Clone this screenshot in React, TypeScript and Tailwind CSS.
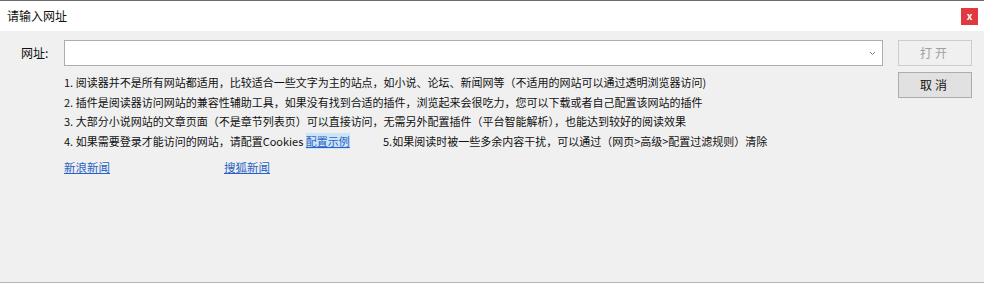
import React from 'react';

const font = { fontFamily: '"Noto Sans CJK SC", "Noto Sans", sans-serif' };

// Notes shown under the URL field
const tips = [
  '1. 阅读器并不是所有网站都适用，比较适合一些文字为主的站点，如小说、论坛、新闻网等（不适用的网站可以通过透明浏览器访问)',
  '2. 插件是阅读器访问网站的兼容性辅助工具，如果没有找到合适的插件，浏览起来会很吃力，您可以下载或者自己配置该网站的插件',
  '3. 大部分小说网站的文章页面（不是章节列表页）可以直接访问，无需另外配置插件（平台智能解析），也能达到较好的阅读效果',
];

export default function App() {
  return (
    <div className="w-[984px] h-[283px] flex flex-col border-t border-[#6b6b6b] text-[#111] overflow-hidden" style={font}>
      <div className="h-[30px] bg-white flex items-center justify-between pl-[7px] pr-[6px]">
        <span className="text-[12px]">请输入网址</span>
        <button className="w-[17px] h-[17px] bg-[#e0393e] text-white text-[10px] font-bold leading-none flex items-center justify-center">
          x
        </button>
      </div>

      <div className="flex-1 bg-[#f0f0f0] border-b border-[#b5b5b5] flex pt-[9px]">
        <div className="flex-1 flex flex-col">
          <div className="flex items-center">
            <span className="w-[64px] pl-[21px] text-[12px]">网址:</span>
            <div className="w-[819px] h-[26px] bg-white border border-[#adadad] flex items-center justify-end pr-[6px]">
              <svg width="7" height="5" viewBox="0 0 7 5" fill="none" stroke="#808080" strokeWidth="1">
                <path d="M1 1l2.5 2.5L6 1" />
              </svg>
            </div>
          </div>

          <div className="pl-[64px] pt-[7px] text-[11px] leading-[19.7px]">
            {tips.map((t) => (
              <div key={t}>{t}</div>
            ))}
            <div className="flex">
              <span className="w-[319px]">
                4. 如果需要登录才能访问的网站，请配置Cookies{' '}
                <a className="text-[#2a62c4] underline bg-[#cce4f7]">配置示例</a>
              </span>
              <span>5.如果阅读时被一些多余内容干扰，可以通过（网页&gt;高级&gt;配置过滤规则）清除</span>
            </div>
            <div className="flex mt-[6px] text-[11.5px]">
              <a className="w-[160px] text-[#2a62c4] underline">新浪新闻</a>
              <a className="text-[#2a62c4] underline">搜狐新闻</a>
            </div>
          </div>
        </div>

        <div className="w-[86px] pr-[12px] flex flex-col gap-[6px]">
          <button className="w-[74px] h-[26px] border border-[#cccccc] bg-[#f0f0f0] text-[#a0a0a0] text-[12px] tracking-[3px]">
            打开
          </button>
          <button className="w-[74px] h-[26px] border border-[#adadad] bg-[#e1e1e1] text-[12px] tracking-[3px]">
            取消
          </button>
        </div>
      </div>
    </div>
  );
}
